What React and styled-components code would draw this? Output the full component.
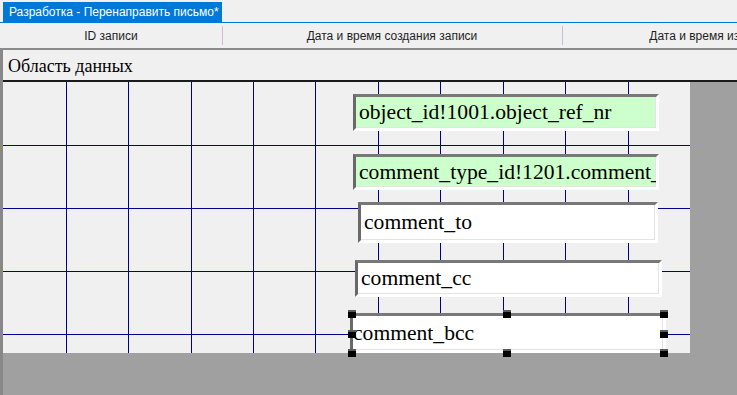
import styled, { createGlobalStyle } from 'styled-components'

const GlobalStyle = createGlobalStyle`
  html, body {
    margin: 0;
    padding: 0;
    background: #f0f0f0;
  }
  #root {
    width: 737px;
    height: 395px;
    overflow: hidden;
  }
`

const columns = [
  { title: 'ID записи', width: 222 },
  { title: 'Дата и время создания записи', width: 340 },
  { title: 'Дата и время изменения записи', width: 354 },
]

const vLines = [63, 125, 188, 250, 312, 375, 437, 500, 562, 625]
const hLines = [63, 126, 189, 252]

const fields = [
  { name: 'object_id!1001.object_ref_nr', x: 350, y: 12, w: 306, h: 37, fill: '#ccffcc' },
  { name: 'comment_type_id!1201.comment_name', x: 350, y: 72, w: 306, h: 36, fill: '#ccffcc' },
  { name: 'comment_to', x: 355, y: 120, w: 300, h: 41, fill: '#ffffff' },
  { name: 'comment_cc', x: 352, y: 178, w: 307, h: 37, fill: '#ffffff' },
  { name: 'comment_bcc', x: 347, y: 231, w: 316, h: 40, fill: '#ffffff', selected: true },
]

const handles = [
  { x: -2, y: -3 }, { x: 153, y: -3 }, { x: 310, y: -3 },
  { x: -2, y: 17 }, { x: 310, y: 17 },
  { x: -2, y: 36 }, { x: 153, y: 36 }, { x: 310, y: 36 },
]

export default function App() {
  return (
    <Window>
      <GlobalStyle />
      <TabBar>
        <Tab>Разработка - Перенаправить письмо*</Tab>
      </TabBar>
      <HeaderRow>
        {columns.map((c, i) => (
          <HeaderCell key={c.title} $width={c.width} $first={i === 0}>
            {c.title}
          </HeaderCell>
        ))}
      </HeaderRow>
      <DesignArea>
        <SectionBand>Область данных</SectionBand>
        <Canvas>
          <GridLines width="687" height="271">
            {vLines.map((x) => (
              <line key={'v' + x} x1={x + 0.5} y1="0" x2={x + 0.5} y2="271" />
            ))}
            {hLines.map((y) => (
              <line key={'h' + y} x1="0" y1={y + 0.5} x2="687" y2={y + 0.5} />
            ))}
          </GridLines>
          {fields.map((f) => (
            <Field key={f.name} $x={f.x} $y={f.y} $w={f.w} $h={f.h} $fill={f.fill}>
              <FieldText $tight={f.selected}>{f.name}</FieldText>
            </Field>
          ))}
          <Selection $x={347} $y={231}>
            {handles.map((h, i) => (
              <Handle key={i} $x={h.x} $y={h.y} />
            ))}
          </Selection>
        </Canvas>
      </DesignArea>
    </Window>
  )
}

const Window = styled.div`
  width: 737px;
  height: 395px;
  display: flex;
  flex-direction: column;
  background: #f0f0f0;
  font-family: 'Liberation Sans', Arial, sans-serif;
  overflow: hidden;
`

const TabBar = styled.div`
  height: 20px;
  padding-top: 2px;
  display: flex;
  border-bottom: 1px solid #0078d7;
  flex-shrink: 0;
`

const Tab = styled.div`
  width: 213px;
  margin-left: 3px;
  padding-left: 6px;
  background: #0078d7;
  color: #ffffff;
  font-size: 12px;
  line-height: 20px;
  white-space: nowrap;
`

const HeaderRow = styled.div`
  height: 25px;
  display: flex;
  flex-shrink: 0;
  border-bottom: 2px solid #8a8a8a;
`

const HeaderCell = styled.div`
  width: ${(p) => p.$width}px;
  flex-shrink: 0;
  position: relative;
  display: flex;
  align-items: center;
  justify-content: center;
  font-size: 12px;
  color: #1e1e1e;
  white-space: nowrap;
  &::before {
    content: '';
    display: ${(p) => (p.$first ? 'none' : 'block')};
    position: absolute;
    left: 0;
    top: 3px;
    bottom: 3px;
    width: 1px;
    background: #cbbdd6;
  }
`

const DesignArea = styled.div`
  flex: 1;
  background: #a0a0a0;
  border-left: 3px solid #888888;
  display: flex;
  flex-direction: column;
`

const SectionBand = styled.div`
  height: 30px;
  flex-shrink: 0;
  background: #f0f0f0;
  border-bottom: 2px solid #1a1a1a;
  padding-left: 5px;
  font-family: 'Liberation Serif', 'Times New Roman', serif;
  font-size: 18px;
  line-height: 32px;
  color: #000000;
`

const Canvas = styled.div`
  position: relative;
  width: 687px;
  height: 271px;
  flex-shrink: 0;
  background: #f0f0f0;
`

const GridLines = styled.svg`
  position: absolute;
  left: 0;
  top: 0;
  stroke: #00008f;
  stroke-width: 1;
  shape-rendering: crispEdges;
`

const Field = styled.div`
  position: absolute;
  left: ${(p) => p.$x}px;
  top: ${(p) => p.$y}px;
  width: ${(p) => p.$w}px;
  height: ${(p) => p.$h}px;
  box-sizing: border-box;
  background: ${(p) => p.$fill};
  border-style: solid;
  border-width: 3px;
  border-color: #787878 #ffffff #ffffff #696969;
  box-shadow: inset -1px -1px 0 #e3e3e3;
  display: flex;
  align-items: center;
  overflow: hidden;
`

const FieldText = styled.span`
  padding-left: ${(p) => (p.$tight ? 0 : 3)}px;
  font-family: 'Liberation Serif', 'Times New Roman', serif;
  font-size: 21.6px;
  color: #000000;
  white-space: nowrap;
`

const Selection = styled.div`
  position: absolute;
  left: ${(p) => p.$x}px;
  top: ${(p) => p.$y}px;
  width: 0;
  height: 0;
`

const Handle = styled.div`
  position: absolute;
  left: ${(p) => p.$x}px;
  top: ${(p) => p.$y}px;
  width: 8px;
  height: 8px;
  background: #000000;
  border-top: 2px solid #5a5a5a;
  box-sizing: border-box;
`
